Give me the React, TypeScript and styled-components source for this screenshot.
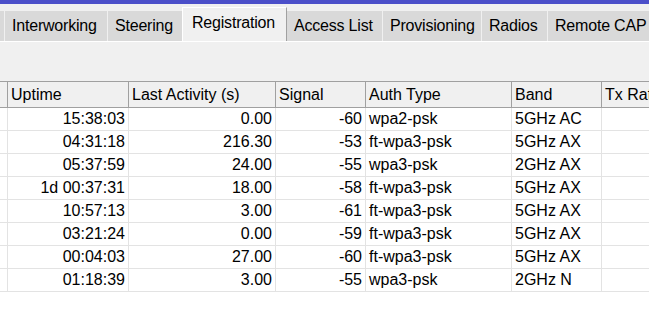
import React from "react";
import styled, { createGlobalStyle } from "styled-components";

const GlobalStyle = createGlobalStyle`
  body {
    margin: 0;
    background: #f0f0f0;
    font-family: "Liberation Sans", Arial, sans-serif;
    font-size: 16px;
    color: #000;
    overflow: hidden;
  }
`;

type Align = "left" | "right";

const columns: { title: string; width: number; align: Align }[] = [
  { title: "", width: 8, align: "left" },
  { title: "Uptime", width: 121, align: "right" },
  { title: "Last Activity (s)", width: 147, align: "right" },
  { title: "Signal", width: 90, align: "right" },
  { title: "Auth Type", width: 146, align: "left" },
  { title: "Band", width: 90, align: "left" },
  { title: "Tx Rate", width: 100, align: "left" },
];

const rows = [
  ["", "15:38:03", "0.00", "-60", "wpa2-psk", "5GHz AC", ""],
  ["", "04:31:18", "216.30", "-53", "ft-wpa3-psk", "5GHz AX", ""],
  ["", "05:37:59", "24.00", "-55", "wpa3-psk", "2GHz AX", ""],
  ["", "1d 00:37:31", "18.00", "-58", "ft-wpa3-psk", "5GHz AX", ""],
  ["", "10:57:13", "3.00", "-61", "ft-wpa3-psk", "5GHz AX", ""],
  ["", "03:21:24", "0.00", "-59", "ft-wpa3-psk", "5GHz AX", ""],
  ["", "00:04:03", "27.00", "-60", "ft-wpa3-psk", "5GHz AX", ""],
  ["", "01:18:39", "3.00", "-55", "wpa3-psk", "2GHz N", ""],
];

// tab widths read off the strip
const tabs = [
  { label: "Interworking", width: 102 },
  { label: "Steering", width: 74 },
  { label: "Registration", width: 105 },
  { label: "Access List", width: 95 },
  { label: "Provisioning", width: 98 },
  { label: "Radios", width: 65 },
  { label: "Remote CAP", width: 110 },
];

const gridTemplate = columns.map((c) => `${c.width}px`).join(" ");

const App: React.FC = () => {
  return (
    <Window>
      <GlobalStyle />
      <TitleBar />
      <TabStrip>
        {/* previous tab, scrolled out of view */}
        <StubTab />
        {tabs.map((t) => (
          <Tab key={t.label} width={t.width} active={t.label === "Registration"}>
            {t.label}
          </Tab>
        ))}
      </TabStrip>
      <Toolbar />
      <Table>
        <HeaderRow>
          {columns.map((c, i) => (
            <HeaderCell key={i}>{c.title}</HeaderCell>
          ))}
        </HeaderRow>
        {rows.map((r, ri) => (
          <Row key={ri}>
            {r.map((v, ci) => (
              <Cell key={ci} align={columns[ci].align}>
                {v}
              </Cell>
            ))}
          </Row>
        ))}
      </Table>
    </Window>
  );
};

const Window = styled.div`
  width: 649px;
  height: 323px;
  display: flex;
  flex-direction: column;
  overflow: hidden;
  background: #f0f0f0;
`;

const TitleBar = styled.div`
  height: 4px;
  flex-shrink: 0;
  background: #4b4fc9;
`;

const TabStrip = styled.div`
  height: 37px;
  flex-shrink: 0;
  display: flex;
  align-items: flex-end;
  border-bottom: 1px solid #ffffff;
  overflow: hidden;
`;

const StubTab = styled.div`
  width: 4px;
  height: 30px;
  flex-shrink: 0;
  margin-right: 1px;
  background: #d9d9d9;
`;

const Tab = styled.div<{ active?: boolean; width: number }>`
  flex-shrink: 0;
  box-sizing: border-box;
  width: ${(p) => p.width}px;
  display: flex;
  align-items: center;
  white-space: nowrap;
  letter-spacing: -0.2px;
  height: ${(p) => (p.active ? "35px" : "30px")};
  padding: ${(p) => (p.active ? "0 0 4px 9px" : "0 0 0 7px")};
  margin-right: ${(p) => (p.active ? "0" : "1px")};
  margin-left: ${(p) => (p.active ? "-1px" : "0")};
  margin-bottom: ${(p) => (p.active ? "-1px" : "0")};
  background: ${(p) => (p.active ? "#f0f0f0" : "#d9d9d9")};
  border-top: ${(p) => (p.active ? "1px solid #ffffff" : "none")};
  border-left: ${(p) => (p.active ? "1px solid #ffffff" : "none")};
  border-right: ${(p) => (p.active ? "1px solid #a0a0a0" : "none")};
`;

const Toolbar = styled.div`
  height: 39px;
  flex-shrink: 0;
`;

const Table = styled.div`
  flex: 1;
  background: #ffffff;
  overflow: hidden;
`;

const HeaderRow = styled.div`
  display: grid;
  grid-template-columns: ${gridTemplate};
  height: 27px;
  box-sizing: border-box;
  background: #f0f0f0;
  border-top: 1px solid #a0a0a0;
  border-bottom: 1px solid #a0a0a0;
`;

const HeaderCell = styled.div`
  display: flex;
  align-items: center;
  padding: 0 3px;
  white-space: nowrap;
  overflow: hidden;
  border-right: 1px solid #a0a0a0;
`;

const Row = styled.div`
  display: grid;
  grid-template-columns: ${gridTemplate};
  height: 23px;
  box-sizing: border-box;
  border-bottom: 1px solid #e3e3e3;
`;

const Cell = styled.div<{ align: Align }>`
  display: flex;
  align-items: center;
  justify-content: ${(p) => (p.align === "right" ? "flex-end" : "flex-start")};
  padding: 0 3px;
  white-space: nowrap;
  overflow: hidden;
  border-right: 1px solid #e3e3e3;
`;

export default App;
